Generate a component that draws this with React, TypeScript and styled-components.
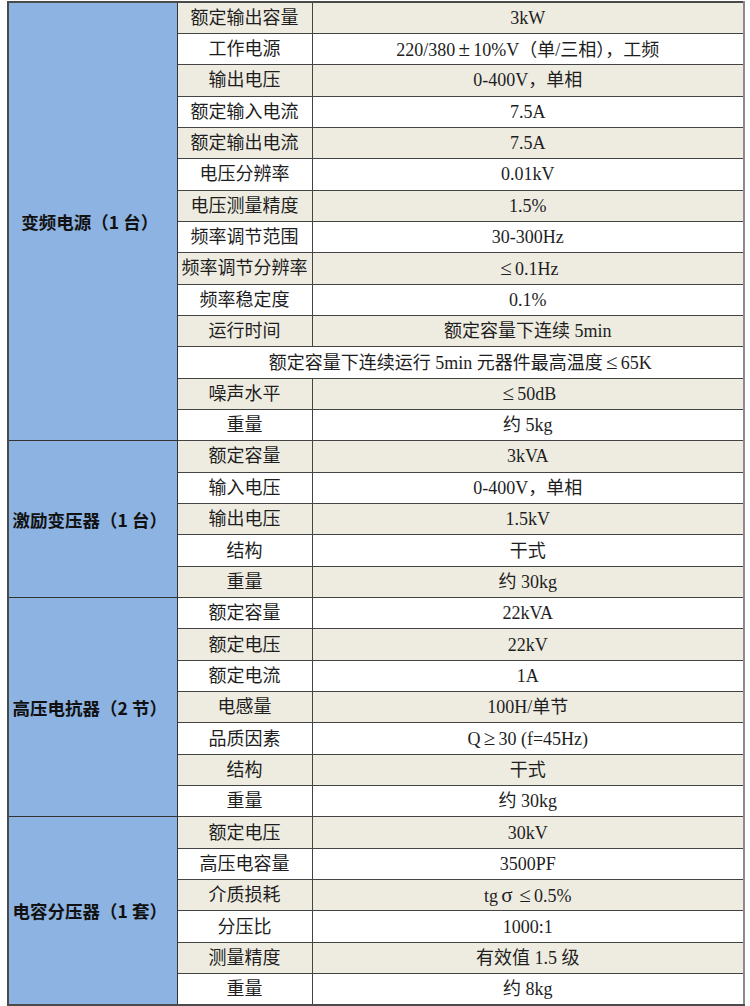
import React from "react";
import styled, { createGlobalStyle } from "styled-components";

const Global = createGlobalStyle`
  html, body { margin: 0; padding: 0; background: #ffffff; }
  body { width: 750px; }
`;

const Page = styled.div`
  padding: 1px 0 0 7px;
`;

const Table = styled.table`
  width: 738px;
  border-collapse: collapse;
  table-layout: fixed;
  border: 2px solid #4a4a4a;
  border-right-color: #8a8a8a;
  font-family: "Liberation Serif", "Noto Sans CJK SC", serif;
  font-size: 18px;
  color: #1e1e1e;
`;

const Row = styled.tr<{ $shade: boolean }>`
  height: 31.35px;
  background: ${(p) => (p.$shade ? "#eeece1" : "#ffffff")};
`;

const Group = styled.td`
  background: #8db3e2;
  border: 1.5px solid #333333;
  text-align: center;
  vertical-align: middle;
  font-family: "Noto Sans CJK SC", sans-serif;
  font-weight: 700;
  font-size: 17.5px;
  color: #111111;
  padding: 0 6px 0 0;
  white-space: nowrap;
`;

const Name = styled.td`
  border: 1.5px solid #444444;
  text-align: center;
  vertical-align: middle;
  padding: 0;
  white-space: nowrap;
  line-height: 1;
`;

const Value = styled.td`
  border: 1.5px solid #444444;
  text-align: center;
  vertical-align: middle;
  padding: 0;
  white-space: nowrap;
  line-height: 1;
`;

const Wide = styled.span`
  display: inline-block;
  width: 18px;
  text-align: center;
  font-size: 21px;
  line-height: 18px;
`;

const WIDE = new Set(["±", "≤", "≥", "σ"]);

function Text({ s }: { s: string }) {
  const parts: React.ReactNode[] = [];
  let buf = "";
  Array.from(s).forEach((ch, i) => {
    if (WIDE.has(ch)) {
      if (buf) parts.push(buf);
      buf = "";
      parts.push(<Wide key={i}>{ch}</Wide>);
    } else {
      buf += ch;
    }
  });
  if (buf) parts.push(buf);
  return <>{parts}</>;
}

type Item = { name: string; value?: string; span?: boolean };
type Section = { title: string; items: Item[] };

const sections: Section[] = [
  {
    title: "变频电源（1 台）",
    items: [
      { name: "额定输出容量", value: "3kW" },
      { name: "工作电源", value: "220/380±10%V（单/三相），工频" },
      { name: "输出电压", value: "0-400V，单相" },
      { name: "额定输入电流", value: "7.5A" },
      { name: "额定输出电流", value: "7.5A" },
      { name: "电压分辨率", value: "0.01kV" },
      { name: "电压测量精度", value: "1.5%" },
      { name: "频率调节范围", value: "30-300Hz" },
      { name: "频率调节分辨率", value: "≤0.1Hz" },
      { name: "频率稳定度", value: "0.1%" },
      { name: "运行时间", value: "额定容量下连续 5min" },
      { name: "额定容量下连续运行 5min 元器件最高温度≤65K", span: true },
      { name: "噪声水平", value: "≤50dB" },
      { name: "重量", value: "约 5kg" },
    ],
  },
  {
    title: "激励变压器（1 台）",
    items: [
      { name: "额定容量", value: "3kVA" },
      { name: "输入电压", value: "0-400V，单相" },
      { name: "输出电压", value: "1.5kV" },
      { name: "结构", value: "干式" },
      { name: "重量", value: "约 30kg" },
    ],
  },
  {
    title: "高压电抗器（2 节）",
    items: [
      { name: "额定容量", value: "22kVA" },
      { name: "额定电压", value: "22kV" },
      { name: "额定电流", value: "1A" },
      { name: "电感量", value: "100H/单节" },
      { name: "品质因素", value: "Q≥30 (f=45Hz)" },
      { name: "结构", value: "干式" },
      { name: "重量", value: "约 30kg" },
    ],
  },
  {
    title: "电容分压器（1 套）",
    items: [
      { name: "额定电压", value: "30kV" },
      { name: "高压电容量", value: "3500PF" },
      { name: "介质损耗", value: "tgσ≤0.5%" },
      { name: "分压比", value: "1000:1" },
      { name: "测量精度", value: "有效值 1.5 级" },
      { name: "重量", value: "约 8kg" },
    ],
  },
];

export default function App() {
  let index = 0;
  return (
    <Page>
      <Global />
      <Table>
        <colgroup>
          <col style={{ width: 169 }} />
          <col style={{ width: 135 }} />
          <col />
        </colgroup>
        <tbody>
          {sections.map((s) =>
            s.items.map((it, i) => {
              const shade = index % 2 === 0;
              index += 1;
              return (
                <Row key={`${s.title}-${i}`} $shade={shade}>
                  {i === 0 && <Group rowSpan={s.items.length}>{s.title}</Group>}
                  {it.span ? (
                    <Value colSpan={2}>
                      <Text s={it.name} />
                    </Value>
                  ) : (
                    <>
                      <Name>{it.name}</Name>
                      <Value>
                        <Text s={it.value ?? ""} />
                      </Value>
                    </>
                  )}
                </Row>
              );
            })
          )}
        </tbody>
      </Table>
    </Page>
  );
}
